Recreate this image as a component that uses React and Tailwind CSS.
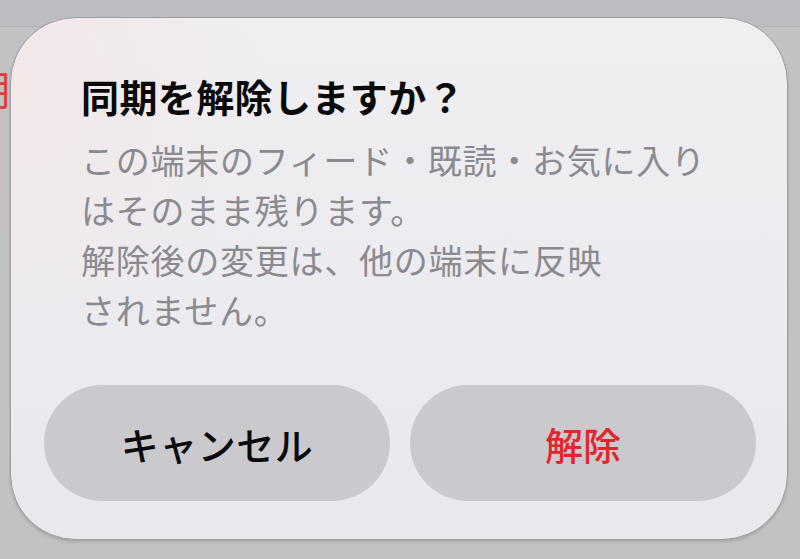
export default function App() {
  const jp = { fontFamily: '"Noto Sans CJK JP", "Noto Sans", sans-serif' };
  return (
    <div className="relative w-[800px] h-[559px] overflow-hidden bg-[#c2c2c5]" style={jp}>
      <div className="h-[27px] bg-[#bdbcc1] border-b border-[#b3b3b7]" />
      <div className="absolute left-[-30px] top-[66px] text-[40px] leading-[44px] text-[#e23a3a]">期</div>
      <div className="absolute left-[10px] top-[17px] w-[778px] h-[523px] rounded-[66px] border border-[#9c9ca0] bg-[#ebeaee] bg-[radial-gradient(circle_at_0%_12%,#f3e7e9_0%,rgba(243,231,233,0)_28%),linear-gradient(180deg,#efeef1_0%,#e9e8ed_100%)] shadow-[0_2px_3px_rgba(0,0,0,0.15)] flex flex-col pt-[55px] pb-[40px]">
        <div className="pl-[70px] text-[38px] leading-[46px] font-bold text-[#0a0a0a] whitespace-nowrap tracking-[0.4px]">同期を解除しますか？</div>
        <div className="pl-[70px] mt-[16px] text-[34px] leading-[50px] text-[#8a8a8f] whitespace-nowrap tracking-[0.75px]">
          この端末のフィード・既読・お気に入り<br />
          はそのまま残ります。<br />
          解除後の変更は、他の端末に反映<br />
          されません。
        </div>
        <div className="mt-[50px] flex gap-[20px] pl-[33px] pr-[31px]">
          <div className="flex-1 h-[116px] rounded-full bg-[#cac9ce] flex items-center justify-center text-[38px] font-medium text-[#0a0a0a] tracking-[0.5px]">キャンセル</div>
          <div className="flex-1 h-[116px] rounded-full bg-[#cac9ce] flex items-center justify-center text-[38px] font-medium text-[#e3262d]">解除</div>
        </div>
      </div>
    </div>
  );
}
